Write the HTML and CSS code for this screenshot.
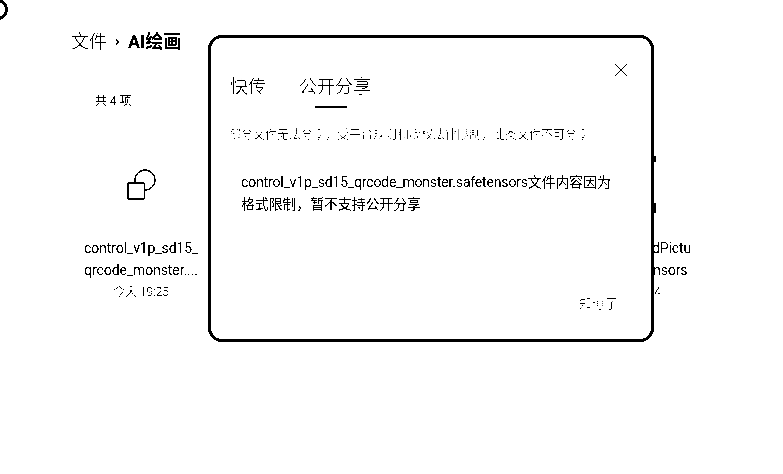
FILE: index.html
```html
<!DOCTYPE html>
<html lang="zh-CN">
<head>
<meta charset="utf-8">
<title>AI绘画</title>
<link rel="stylesheet" href="styles.css">
</head>
<body>
<span class="avatar"></span>
<main class="page">
  <nav class="crumbs"><span>文件</span><span class="sep">›</span><strong>AI绘画</strong></nav>
  <p class="count">共 4 项</p>
  <section class="grid">
    <article class="card">
      <svg class="file-icon" width="34" height="32" viewBox="0 0 34 32"><circle cx="21" cy="11" r="10" fill="none" stroke="#000" stroke-width="1.3"/><rect x="4" y="14" width="16.5" height="16" rx="1" fill="#fff" stroke="#000" stroke-width="1.6"/></svg>
      <p class="name">control_v1p_sd15_<br>qrcode_monster....</p>
      <p class="date">今天 19:25</p>
    </article>
    <article class="card">
      <svg class="file-icon" width="34" height="32" viewBox="0 0 34 32"><circle cx="21" cy="11" r="10" fill="none" stroke="#000" stroke-width="1.3"/><rect x="4" y="14" width="16.5" height="16" rx="1" fill="#fff" stroke="#000" stroke-width="1.6"/></svg>
      <p class="name">control_v1p_sd15_<br>brightness.safe...</p>
      <p class="date">今天 19:28</p>
    </article>
    <article class="card">
      <svg class="file-icon" width="34" height="32" viewBox="0 0 34 32"><circle cx="21" cy="11" r="10" fill="none" stroke="#000" stroke-width="1.3"/><rect x="4" y="14" width="16.5" height="16" rx="1" fill="#fff" stroke="#000" stroke-width="1.6"/></svg>
      <p class="name">control_v11p_sd15_<br>lineart.safetens...</p>
      <p class="date">今天 19:30</p>
    </article>
    <article class="card">
      <svg class="file-icon" width="34" height="32" viewBox="0 0 34 32"><circle cx="21" cy="11" r="10" fill="none" stroke="#000" stroke-width="1.3"/><rect x="4" y="14" width="16.5" height="16" rx="1" fill="#fff" stroke="#000" stroke-width="1.6"/></svg>
      <p class="name">realisticStandPictu<br>re_v1.safetensors</p>
      <p class="date">今天 19:34</p>
    </article>
  </section>
</main>
<div class="modal" role="dialog">
  <button class="close" aria-label="关闭"><svg width="14" height="14" viewBox="0 0 14 14"><path d="M1 1 13 13M13 1 1 13" stroke="#000" stroke-width="1" fill="none"/></svg></button>
  <div class="tabs"><span class="tab">快传</span><span class="tab active">公开分享</span></div>
  <p class="hint">部分文件无法分享，受平台规则和版权法律限制，此类文件不可分享</p>
  <p class="message">control_v1p_sd15_qrcode_monster.safetensors文件内容因为格式限制，暂不支持公开分享</p>
  <div class="actions"><span class="ok">知道了</span></div>
</div>
</body>
</html>
```
FILE: styles.css
```css
* { box-sizing: border-box; }
html { background: #fff; }
body {
  margin: 0;
  height: 474px;
  overflow: hidden;
  background: #fff;
  color: #000;
  font-family: Roboto, "Noto Sans CJK SC", sans-serif;
  filter: grayscale(1) contrast(50);
  position: relative;
}
p { margin: 0; }
.avatar {
  position: absolute;
  left: -13px;
  top: -1px;
  width: 21px;
  height: 21px;
  border: 3px solid #000;
  border-radius: 50%;
}
.page { padding: 28px 0 0 71px; }
.crumbs {
  display: flex;
  align-items: center;
  height: 24px;
  font-size: 18px;
  font-weight: 300;
}
.sep { margin: 0 8px 0 8px; font-family: "Noto Sans", sans-serif; font-size: 15px; font-weight: 500; }
.crumbs strong { font-size: 18px; font-weight: 700; }
.count { margin: 40px 0 0 24px; font-size: 12px; line-height: 18px; }
.grid {
  display: grid;
  grid-template-columns: repeat(4, 114px);
  gap: 50px;
  margin: 59px 0 0 13px;
}
.card { text-align: center; }
.file-icon { display: block; margin: 0 auto 36px 40px; }
.name { font-size: 14px; line-height: 22px; white-space: nowrap; letter-spacing: -0.1px; }
.date { margin-top: 1px; font-size: 12px; line-height: 20px; font-weight: 300; }
.modal {
  position: absolute;
  left: 208px;
  top: 35px;
  width: 446px;
  height: 307px;
  padding: 35px 19px 0;
  background: #fff;
  border: 3px solid #000;
  border-radius: 14px;
  display: flex;
  flex-direction: column;
}
.modal::before,
.modal::after {
  content: "";
  position: absolute;
  right: -5px;
  width: 2px;
  background: #000;
}
.modal::before { top: 118px; height: 6px; }
.modal::after { top: 165px; height: 10px; }
.close {
  position: absolute;
  right: 23px;
  top: 25px;
  width: 14px;
  height: 14px;
  padding: 0;
  border: 0;
  background: none;
  display: block;
}
.close svg { display: block; }
.tabs { display: flex; gap: 33px; font-size: 18px; line-height: 28px; }
.tab { position: relative; font-weight: 300; }
.active::after {
  content: "";
  position: absolute;
  left: 16px;
  bottom: -7px;
  width: 32px;
  height: 2px;
  background: #000;
}
.hint { margin-top: 25px; margin-left: -1px; font-size: 12px; line-height: 18px; color: #666; }
.message { margin: 27px 10px 0 11px; font-size: 14px; line-height: 22px; letter-spacing: -0.17px; }
.actions { margin-top: auto; margin-bottom: 26px; display: flex; justify-content: flex-end; padding-right: 14px; }
.ok { font-size: 13px; line-height: 18px; color: #777; }
```
